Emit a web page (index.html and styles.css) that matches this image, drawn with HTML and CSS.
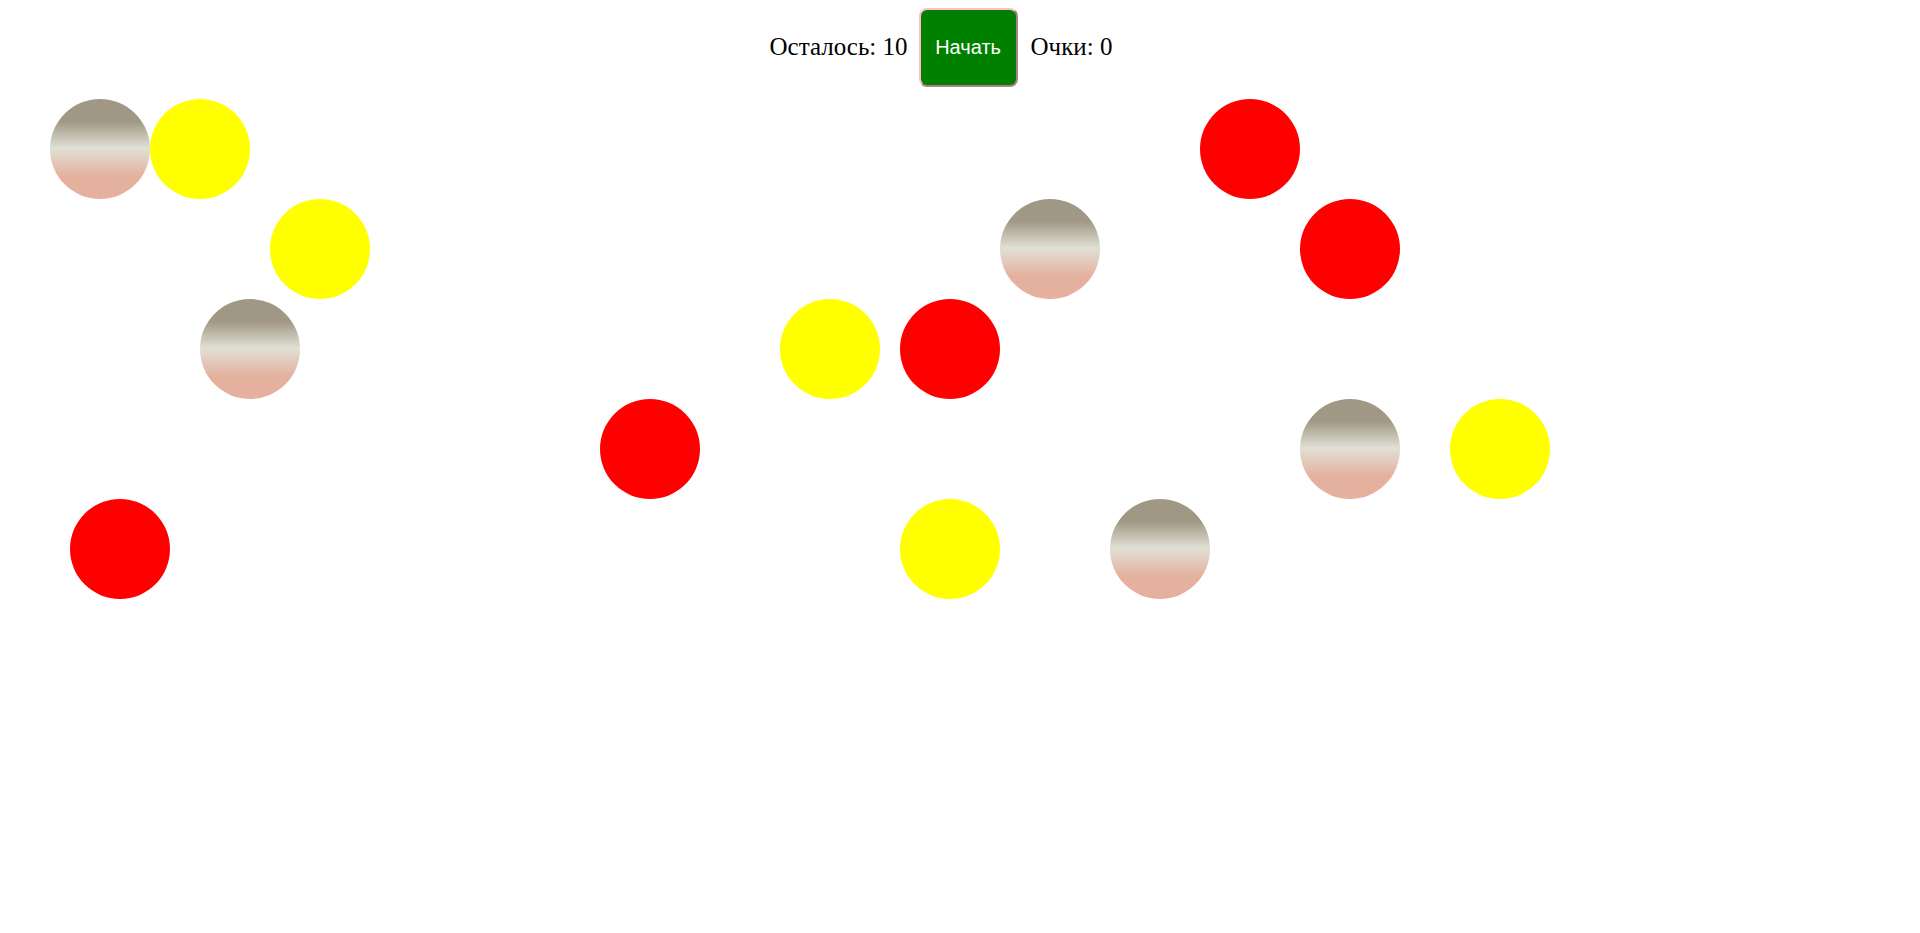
FILE: index.html
```html
<!DOCTYPE html>
<html lang="ru">
<head>
<meta charset="utf-8">
<title>Игра</title>
<link rel="stylesheet" href="styles.css">
</head>
<body>
<header class="bar">
  <span class="stat">Осталось: 10</span>
  <button class="start">Начать</button>
  <span class="stat">Очки: 0</span>
</header>
<main class="field">
  <div class="ball ball-stone" style="left:50px;top:0px"></div>
  <div class="ball ball-yellow" style="left:150px;top:0px"></div>
  <div class="ball ball-yellow" style="left:270px;top:100px"></div>
  <div class="ball ball-stone" style="left:200px;top:200px"></div>
  <div class="ball ball-red" style="left:70px;top:400px"></div>
  <div class="ball ball-red" style="left:600px;top:300px"></div>
  <div class="ball ball-yellow" style="left:780px;top:200px"></div>
  <div class="ball ball-red" style="left:900px;top:200px"></div>
  <div class="ball ball-stone" style="left:1000px;top:100px"></div>
  <div class="ball ball-red" style="left:1200px;top:0px"></div>
  <div class="ball ball-red" style="left:1300px;top:100px"></div>
  <div class="ball ball-stone" style="left:1300px;top:300px"></div>
  <div class="ball ball-yellow" style="left:1450px;top:300px"></div>
  <div class="ball ball-yellow" style="left:900px;top:400px"></div>
  <div class="ball ball-stone" style="left:1110px;top:400px"></div>
</main>
</body>
</html>
```
FILE: styles.css
```css
html, body {
  background: #fff;
}
body {
  margin: 8px;
  font-family: "Liberation Serif", "Times New Roman", serif;
  font-size: 25px;
  color: #000;
}
.bar {
  display: flex;
  justify-content: center;
  align-items: center;
  gap: 11px;
  padding-right: 38px;
}
.stat {
  line-height: 28px;
  position: relative;
  top: -1px;
}
.start {
  width: 99px;
  height: 79px;
  margin-right: 2px;
  background: #008000;
  color: #fff;
  border: 2px outset #ffc0cb;
  border-radius: 8px;
  font-family: "Liberation Sans", Arial, sans-serif;
  font-size: 20px;
  padding: 0;
}
.field {
  position: relative;
  margin: 12px -8px 0;
  height: 500px;
}
.ball {
  position: absolute;
  width: 100px;
  height: 100px;
  border-radius: 50%;
}
.ball-red {
  background: #ff0000;
}
.ball-yellow {
  background: #ffff00;
}
.ball-stone {
  background: linear-gradient(to bottom, #a09784 0%, #a09784 22%, #e0e0d5 49%, #e5b19f 77%, #e5b09e 100%);
}
```
